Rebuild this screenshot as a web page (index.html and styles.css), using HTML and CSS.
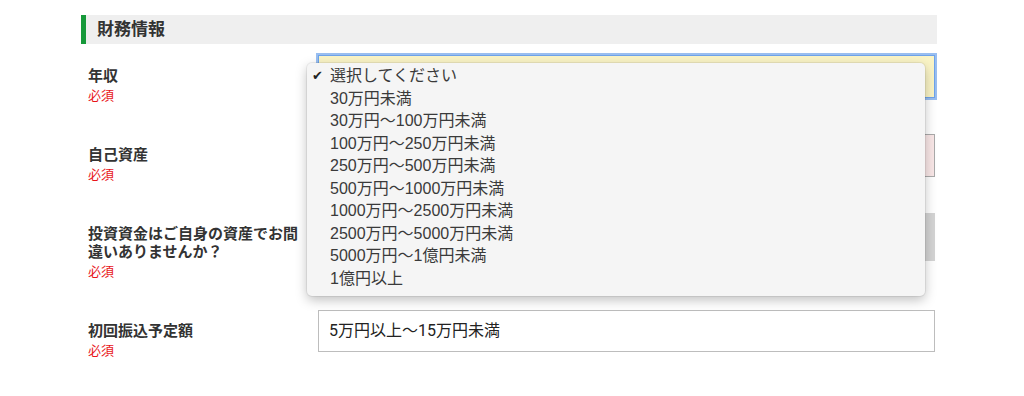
FILE: index.html
```html
<!DOCTYPE html>
<html>
  <head>
    <meta charset="UTF-8">
    <title>財務情報</title>
    <link rel="stylesheet" href="styles.css">
  </head>

  <body>
    <!-- 財務情報 -->
    <div class="form-section">
      <h3 class="section-title">財務情報</h3>

      <div class="form-row">
        <div class="form-label">
          <span class="label-text">年収</span>
          <span class="required">必須</span>
        </div>
        <div class="form-field">
          <div class="select is-focus"></div>

          <!-- 開いているドロップダウン -->
          <ul class="select-menu">
            <li class="is-checked"><span class="check">✔</span>選択してください</li>
            <li><span class="check"></span>30万円未満</li>
            <li><span class="check"></span>30万円〜100万円未満</li>
            <li><span class="check"></span>100万円〜250万円未満</li>
            <li><span class="check"></span>250万円〜500万円未満</li>
            <li><span class="check"></span>500万円〜1000万円未満</li>
            <li><span class="check"></span>1000万円〜2500万円未満</li>
            <li><span class="check"></span>2500万円〜5000万円未満</li>
            <li><span class="check"></span>5000万円〜1億円未満</li>
            <li><span class="check"></span>1億円以上</li>
          </ul>
        </div>
      </div>

      <div class="form-row">
        <div class="form-label">
          <span class="label-text">自己資産</span>
          <span class="required">必須</span>
        </div>
        <div class="form-field">
          <div class="select is-error"></div>
        </div>
      </div>

      <div class="form-row">
        <div class="form-label">
          <span class="label-text">投資資金はご自身の資産でお間違いありませんか？</span>
          <span class="required">必須</span>
        </div>
        <div class="form-field">
          <div class="select is-button"></div>
        </div>
      </div>

      <div class="form-row">
        <div class="form-label">
          <span class="label-text">初回振込予定額</span>
          <span class="required">必須</span>
        </div>
        <div class="form-field">
          <div class="select is-plain">5万円以上〜15万円未満</div>
        </div>
      </div>
    </div>
  </body>
</html>
```

FILE: styles.css
```css
/* CSS styles */
body {
  margin: 0;
  font-family: "Liberation Sans", "Noto Sans CJK JP", sans-serif;
  background-color: #fff;
  color: #333;
}

.form-section {
  width: 856px;
  margin-left: 81px;
  padding-top: 15px;
}

.section-title {
  margin: 0 0 11px;
  height: 29px;
  line-height: 29px;
  padding-left: 11px;
  border-left: 5px solid #16993a;
  background-color: #efefef;
  font-size: 17px;
  font-weight: bold;
  color: #333;
}

.form-row {
  display: flex;
  padding-left: 7px;
  margin-bottom: 29px;
}

.form-label {
  width: 230px;
  flex-shrink: 0;
  padding-top: 12px;
}

.label-text {
  display: block;
  width: 215px;
  font-size: 15px;
  font-weight: bold;
  line-height: 18px;
  color: #333;
}

.required {
  display: block;
  margin-top: 2px;
  font-size: 13px;
  line-height: 18px;
  color: #e8141a;
}

.form-field {
  position: relative;
  width: 617px;
}

.select {
  box-sizing: border-box;
  height: 43px;
  line-height: 41px;
  padding: 0 10px;
  border: 1px solid #aaa;
  font-size: 16px;
  color: #333;
}

.select.is-focus {
  background-color: #faf4c6;
  border-color: #6ea3ea;
  box-shadow: 0 0 0 2px rgba(110, 163, 234, 0.7);
}

.select.is-error {
  background-color: #f9e7e7;
}

.select.is-button {
  height: 48px;
  line-height: 48px;
  border: none;
  background-color: #d4d4d4;
}

.select.is-plain {
  height: 42px;
  line-height: 39px;
  border: 1.5px solid #bdbdbd;
  font-family: Roboto, "Noto Sans CJK JP", sans-serif;
  color: #222;
}

.select-menu {
  position: absolute;
  z-index: 10;
  top: 8px;
  left: -11px;
  width: 618px;
  margin: 0;
  padding: 2px 0 6px;
  list-style: none;
  background-color: #f5f5f5;
  border-radius: 5px;
  box-shadow: 0 0 0 1px rgba(0, 0, 0, 0.06), 0 4px 12px rgba(0, 0, 0, 0.25);
}

.select-menu li {
  display: flex;
  height: 22.5px;
  line-height: 22.5px;
  font-size: 16px;
  color: #3a3a3a;
}

.check {
  width: 18px;
  padding-left: 5px;
  font-family: "DejaVu Sans", sans-serif;
  font-size: 13px;
  color: #222;
}
```
